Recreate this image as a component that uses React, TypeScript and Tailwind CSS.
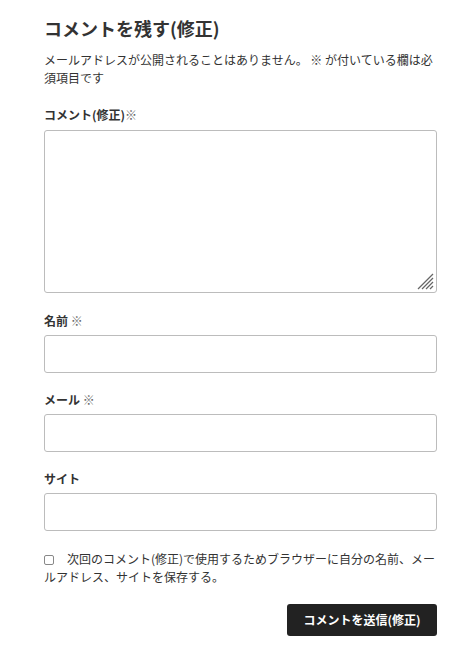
import React from 'react';

const font = { fontFamily: '"Noto Sans CJK JP", "Noto Sans", sans-serif' };

function Field({ label, required, first }: { label: string; required?: boolean; first?: boolean }) {
  return (
    <>
      <label
        className={`${first ? 'mt-[19px]' : 'mt-[18px]'} block text-[12px] leading-[18px] font-bold text-[#333]`}
      >
        {label}
        {required && <span className="font-normal text-[#666]"> ※</span>}
      </label>
      <input
        type="text"
        className="mt-[5px] block h-[38px] w-full rounded-[3px] border border-[#bcbcbc] bg-white px-2 text-[13px] outline-none"
      />
    </>
  );
}

export default function App() {
  return (
    <div className="min-h-[645px] w-[470px] bg-white" style={font}>
      <form className="flex flex-col pl-[44px] pr-[33px] pt-[15px] text-[#333]">
        <h3 className="text-[18px] leading-[26px] font-bold text-[#333]">コメントを残す(修正)</h3>
        <p className="mt-[10px] text-[12px] leading-[18px] text-[#333]">
          メールアドレスが公開されることはありません。 ※ が付いている欄は必須項目です
        </p>

        <label className="mt-[19px] block text-[12px] leading-[18px] font-bold text-[#333]">
          コメント(修正)<span className="font-normal text-[#666]">※</span>
        </label>
        <div className="relative mt-[6px]">
          <textarea className="block h-[163px] w-full resize-none rounded-[3px] border border-[#bcbcbc] bg-white p-2 text-[13px] outline-none" />
          <svg className="pointer-events-none absolute bottom-[3px] right-[3px]" width="17" height="17" viewBox="0 0 17 17">
            <g stroke="#666" strokeWidth="1.2">
              <line x1="1" y1="16" x2="16" y2="1" />
              <line x1="5" y1="16" x2="16" y2="5" />
              <line x1="9" y1="16" x2="16" y2="9" />
              <line x1="13" y1="16" x2="16" y2="13" />
            </g>
          </svg>
        </div>

        <Field label="名前" required first />
        <Field label="メール" required />
        <Field label="サイト" />

        <p className="mt-[19px] text-[12px] leading-[18px] text-[#333]">
          <input
            type="checkbox"
            className="mr-[13px] inline-block h-[10px] w-[10px] appearance-none rounded-[2px] border border-[#888] bg-white align-[-1px]"
          />
          次回のコメント(修正)で使用するためブラウザーに自分の名前、メールアドレス、サイトを保存する。
        </p>

        <div className="mt-[18px] flex justify-end">
          <button
            type="button"
            className="h-[32px] w-[150px] rounded-[3px] bg-[#222] text-[12px] font-bold text-white"
          >
            コメントを送信(修正)
          </button>
        </div>
      </form>
    </div>
  );
}
